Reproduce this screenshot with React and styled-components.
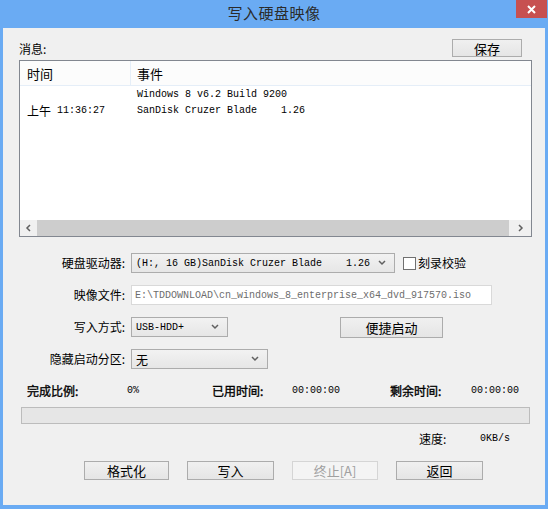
import React from "react";
import styled, { createGlobalStyle } from "styled-components";

const GlobalStyle = createGlobalStyle`
  html, body {
    margin: 0;
    padding: 0;
    overflow: hidden;
    background: #6aabf3;
  }
  * { box-sizing: border-box; }
`;

const CJK = `"Noto Sans CJK SC", "Noto Sans", sans-serif`;
const MONO = `"Liberation Mono", "DejaVu Sans Mono", "Noto Sans CJK SC", monospace`;

/* 窗口外框 */
const Window = styled.div`
  width: 548px;
  height: 509px;
  background: #6aabf3;
  display: flex;
  flex-direction: column;
  font-family: ${CJK};
  font-size: 12px;
  color: #000;
`;

const TitleBar = styled.div`
  height: 28px;
  display: grid;
  grid-template-columns: 1fr auto 1fr;
  align-items: start;
`;

const TitleText = styled.div`
  grid-column: 2;
  font-size: 15px;
  line-height: 26px;
  color: #2b2b2b;
  letter-spacing: 0.5px;
`;

const CloseButton = styled.div`
  grid-column: 3;
  justify-self: end;
  width: 31px;
  height: 18px;
  margin-right: 1px;
  background: #c75050;
  display: flex;
  align-items: center;
  justify-content: center;
`;

const Client = styled.div`
  flex: 1;
  margin: 0 3px 4px 3px;
  background: #f0f0f0;
  display: flex;
  flex-direction: column;
`;

/* 消息 + 保存 */
const TopRow = styled.div`
  margin-top: 11px;
  height: 18px;
  padding: 0 23px 0 16px;
  display: flex;
  justify-content: space-between;
`;

const Label = styled.span`
  line-height: 16px;
  align-self: flex-end;
  white-space: nowrap;
`;

const Button = styled.div`
  width: ${(p) => p.$w || 86}px;
  height: ${(p) => p.$h || 19}px;
  border: 1px solid ${(p) => (p.$disabled ? "#d5d5d5" : "#acacac")};
  background: ${(p) =>
    p.$disabled ? "#f4f4f4" : "linear-gradient(#f0f0f0, #e5e5e5)"};
  color: ${(p) => (p.$disabled ? "#a0a0a0" : "#000")};
  display: flex;
  align-items: center;
  justify-content: center;
  font-size: 13px;
  line-height: 1;
  margin-left: ${(p) => p.$ml || 0}px;
  white-space: nowrap;
`;

/* 消息列表 */
const ListBox = styled.div`
  margin: 3px 13px 0 16px;
  height: 177px;
  border: 1px solid #828790;
  background: #fff;
  display: flex;
  flex-direction: column;
`;

const ListHeader = styled.div`
  height: 25px;
  display: flex;
  border-bottom: 1px solid #e5eef8;
  background: #fcfcfc;
  font-size: 13px;
`;

const HeaderCell = styled.div`
  width: ${(p) => (p.$w ? `${p.$w}px` : "auto")};
  flex: ${(p) => (p.$w ? "none" : 1)};
  padding-left: ${(p) => p.$pl}px;
  border-right: ${(p) => (p.$w ? "1px solid #e5eef8" : "none")};
  display: flex;
  align-items: center;
`;

const ListBody = styled.div`
  flex: 1;
`;

const ListRow = styled.div`
  height: 16px;
  display: flex;
  align-items: center;
`;

const Cell = styled.div`
  width: ${(p) => (p.$w ? `${p.$w}px` : "auto")};
  flex: ${(p) => (p.$w ? "none" : 1)};
  padding-left: ${(p) => p.$pl}px;
  white-space: pre;
  display: flex;
  align-items: center;
`;

const Mono = styled.span`
  font-family: ${MONO};
  font-size: 10px;
  white-space: pre;
  color: ${(p) => p.$color || "inherit"};
`;

const CjkText = styled.span`
  font-size: 12px;
  margin-right: 6px;
`;

const ScrollBar = styled.div`
  height: 16px;
  display: flex;
  background: #f0f0f0;
`;

const ScrollArrow = styled.div`
  width: ${(p) => p.$w}px;
  display: flex;
  align-items: center;
  justify-content: center;
`;

const ScrollThumb = styled.div`
  flex: 1;
  background: #cdcdcd;
`;

/* 表单区域 */
const Form = styled.div`
  margin-top: 16px;
  display: grid;
  grid-template-columns: 122px 1fr;
  column-gap: 6px;
  row-gap: 12px;
  grid-auto-rows: 20px;
`;

const FormLabel = styled.div`
  text-align: right;
  line-height: 20px;
  white-space: nowrap;
`;

const FormControls = styled.div`
  display: flex;
  align-items: center;
`;

const Select = styled.div`
  width: ${(p) => p.$w}px;
  height: 20px;
  border: 1px solid #acacac;
  background: linear-gradient(#f2f2f2, #e6e6e6);
  display: flex;
  align-items: center;
  padding: 0 8px 0 4px;
  justify-content: space-between;
`;

const SelectText = styled.span`
  font-family: ${(p) => (p.$cjk ? CJK : MONO)};
  font-size: ${(p) => (p.$cjk ? 12 : 10)}px;
  white-space: pre;
`;

const TextInput = styled.div`
  width: 361px;
  height: 20px;
  border: 1px solid #d9d9d9;
  background: #fff;
  display: flex;
  align-items: center;
  padding-left: 3px;
`;

const CheckBox = styled.div`
  width: 13px;
  height: 13px;
  border: 1px solid #707070;
  background: #fff;
  margin-left: 8px;
  margin-right: 2px;
`;

const CheckLabel = styled.span`
  font-size: 12px;
  line-height: 1;
`;

/* 状态区域 */
const StatusRow = styled.div`
  margin-top: 14px;
  padding-left: 24px;
  display: grid;
  grid-template-columns: 100px 85px 80px 98px 81px auto;
  line-height: 16px;
  align-items: center;
`;

const StatusLabel = styled.span`
  font-size: 12px;
  -webkit-text-stroke: ${(p) => (p.$bold ? "0.35px #000" : "0")};
  white-space: nowrap;
`;

const Progress = styled.div`
  margin: 8px 15px 0 18px;
  height: 17px;
  border: 1px solid #bcbcbc;
  background: #e6e6e6;
`;

const SpeedRow = styled.div`
  margin-top: 7px;
  padding-left: 416px;
  display: grid;
  grid-template-columns: 61px auto;
  line-height: 16px;
  align-items: center;
`;

const ButtonRow = styled.div`
  margin-top: 14px;
  padding-left: 81px;
  display: flex;
  gap: 18px;
`;

const Chevron = ({ dir }) => {
  const pts = {
    down: "1,1 4,4 7,1",
    left: "5,1 2,4 5,7",
    right: "2,1 5,4 2,7",
  }[dir];
  const w = dir === "down" ? 8 : 7;
  const h = dir === "down" ? 6 : 8;
  return (
    <svg width={w} height={h} viewBox={`0 0 ${w} ${h}`}>
      <polyline points={pts} fill="none" stroke="#606060" strokeWidth="1.5" />
    </svg>
  );
};

function App() {
  return (
    <>
      <GlobalStyle />
      <Window>
        <TitleBar>
          <TitleText>写入硬盘映像</TitleText>
          <CloseButton>
            <svg width="9" height="9" viewBox="0 0 9 9">
              <path d="M1 1 L8 8 M8 1 L1 8" stroke="#fff" strokeWidth="2" />
            </svg>
          </CloseButton>
        </TitleBar>
        <Client>
          <TopRow>
            <Label>消息:</Label>
            <Button $w={70} $h={18}>保存</Button>
          </TopRow>

          <ListBox>
            <ListHeader>
              <HeaderCell $w={111} $pl={7}>时间</HeaderCell>
              <HeaderCell $pl={6}>事件</HeaderCell>
            </ListHeader>
            <ListBody>
              <ListRow>
                <Cell $w={111} $pl={7} />
                <Cell $pl={6}>
                  <Mono>Windows 8 v6.2 Build 9200</Mono>
                </Cell>
              </ListRow>
              <ListRow>
                <Cell $w={111} $pl={7}>
                  <CjkText>上午</CjkText>
                  <Mono>11:36:27</Mono>
                </Cell>
                <Cell $pl={6}>
                  <Mono>SanDisk Cruzer Blade    1.26</Mono>
                </Cell>
              </ListRow>
            </ListBody>
            <ScrollBar>
              <ScrollArrow $w={17}>
                <Chevron dir="left" />
              </ScrollArrow>
              <ScrollThumb />
              <ScrollArrow $w={22}>
                <Chevron dir="right" />
              </ScrollArrow>
            </ScrollBar>
          </ListBox>

          <Form>
            <FormLabel>硬盘驱动器:</FormLabel>
            <FormControls>
              <Select $w={264}>
                <SelectText>(H:, 16 GB)SanDisk Cruzer Blade    1.26</SelectText>
                <Chevron dir="down" />
              </Select>
              <CheckBox />
              <CheckLabel>刻录校验</CheckLabel>
            </FormControls>

            <FormLabel>映像文件:</FormLabel>
            <FormControls>
              <TextInput>
                <Mono $color="#6d6d6d">
                  E:\TDDOWNLOAD\cn_windows_8_enterprise_x64_dvd_917570.iso
                </Mono>
              </TextInput>
            </FormControls>

            <FormLabel>写入方式:</FormLabel>
            <FormControls>
              <Select $w={97}>
                <SelectText>USB-HDD+</SelectText>
                <Chevron dir="down" />
              </Select>
              <Button $w={103} $h={21} $ml={112}>便捷启动</Button>
            </FormControls>

            <FormLabel>隐藏启动分区:</FormLabel>
            <FormControls>
              <Select $w={137}>
                <SelectText $cjk>无</SelectText>
                <Chevron dir="down" />
              </Select>
            </FormControls>
          </Form>

          <StatusRow>
            <StatusLabel $bold>完成比例:</StatusLabel>
            <Mono>0%</Mono>
            <StatusLabel $bold>已用时间:</StatusLabel>
            <Mono>00:00:00</Mono>
            <StatusLabel $bold>剩余时间:</StatusLabel>
            <Mono>00:00:00</Mono>
          </StatusRow>

          <Progress />

          <SpeedRow>
            <StatusLabel>速度:</StatusLabel>
            <Mono>0KB/s</Mono>
          </SpeedRow>

          <ButtonRow>
            <Button $w={85}>格式化</Button>
            <Button $w={87}>写入</Button>
            <Button $w={86} $disabled>终止[A]</Button>
            <Button $w={87}>返回</Button>
          </ButtonRow>
        </Client>
      </Window>
    </>
  );
}

export default App;
